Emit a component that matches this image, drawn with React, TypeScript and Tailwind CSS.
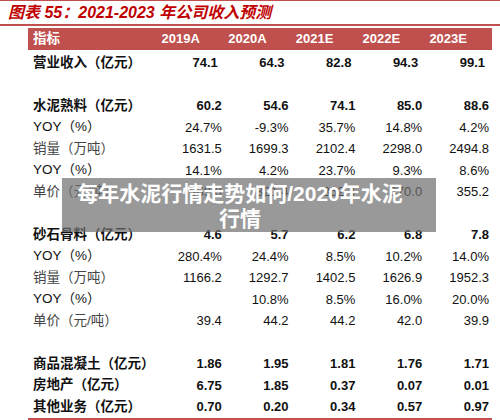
import React from 'react';

type Row = {
  label: string;
  values: string[];
  bold?: boolean;
  soft?: boolean;
  shift?: boolean;
} | null;

const years = ['2019A', '2020A', '2021E', '2022E', '2023E'];

const rows: Row[] = [
  { label: '营业收入（亿元）', values: ['74.1', '64.3', '82.8', '94.3', '99.1'], bold: true, shift: true },
  null,
  { label: '水泥熟料（亿元）', values: ['60.2', '54.6', '74.1', '85.0', '88.6'], bold: true },
  { label: 'YOY（%）', values: ['24.7%', '-9.3%', '35.7%', '14.8%', '4.2%'] },
  { label: '销量（万吨）', values: ['1631.5', '1699.3', '2102.4', '2298.0', '2494.8'], soft: true },
  { label: 'YOY（%）', values: ['14.1%', '4.2%', '23.7%', '9.3%', '8.6%'] },
  { label: '单价（元/吨）', values: ['369.0', '321.4', '352.4', '370.0', '355.2'], soft: true },
  null,
  { label: '砂石骨料（亿元）', values: ['4.6', '5.7', '6.2', '6.8', '7.8'], bold: true },
  { label: 'YOY（%）', values: ['280.4%', '24.4%', '8.5%', '10.2%', '14.0%'] },
  { label: '销量（万吨）', values: ['1166.2', '1292.7', '1402.5', '1626.9', '1952.3'], soft: true },
  { label: 'YOY（%）', values: ['', '10.8%', '8.5%', '16.0%', '20.0%'] },
  { label: '单价（元/吨）', values: ['39.4', '44.2', '44.2', '42.0', '39.9'], soft: true },
  null,
  { label: '商品混凝土（亿元）', values: ['1.86', '1.95', '1.81', '1.76', '1.71'], bold: true },
  { label: '房地产（亿元）', values: ['6.75', '1.85', '0.37', '0.07', '0.01'], bold: true },
  { label: '其他业务（亿元）', values: ['0.70', '0.20', '0.34', '0.57', '0.97'], bold: true },
];

const font = { fontFamily: '"Liberation Sans", "Noto Sans CJK SC", sans-serif' };

export default function App() {
  return (
    <div className="relative w-[500px] h-[420px] overflow-hidden bg-white" style={font}>
      <div className="h-[26px] border-t border-b-2 border-[#c0504d] pl-[8px] flex items-center">
        <span className="text-[16px] font-bold italic text-[#c00000] leading-none">
          图表 55：2021-2023 年公司收入预测
        </span>
      </div>

      <div className="ml-[28px] w-[464px] mt-[2px]">
        <div className="h-[22px] bg-[#c0504d] flex items-center text-white font-bold">
          <div className="w-[127px] pl-[5px] text-[13.5px]">指标</div>
          {years.map((y) => (
            <div key={y} className="w-[66.8px] text-right pr-[22px] text-[13px]">
              {y}
            </div>
          ))}
        </div>

        <div className="mt-[2px] border-b-2 border-[#c0504d]">
          {rows.map((r, i) =>
            r === null ? (
              <div key={i} className="h-[21.5px]" />
            ) : (
              <div key={i} className="h-[21.5px] flex items-center text-[#111]">
                <div
                  className={`w-[127px] pl-[5px] text-[13.5px] whitespace-nowrap ${
                    r.bold ? 'font-bold' : ''
                  } ${r.soft ? 'text-[#444]' : ''}`}
                >
                  {r.label}
                </div>
                {r.values.map((v, j) => (
                  <div
                    key={j}
                    className={`w-[66.8px] text-right text-[13px] ${r.bold ? 'font-bold' : ''} ${
                      r.shift ? 'pr-[4px]' : ''
                    }`}
                  >
                    {v}
                  </div>
                ))}
              </div>
            )
          )}
        </div>
      </div>

      <div className="absolute left-[62px] top-[178px] w-[374px] h-[54px] bg-[rgba(110,110,110,0.7)] pl-[10px] pr-[28px] pt-[3px] text-center text-white font-bold text-[21px] leading-[25px]">
        每年水泥行情走势如何/2020年水泥行情
      </div>
    </div>
  );
}
